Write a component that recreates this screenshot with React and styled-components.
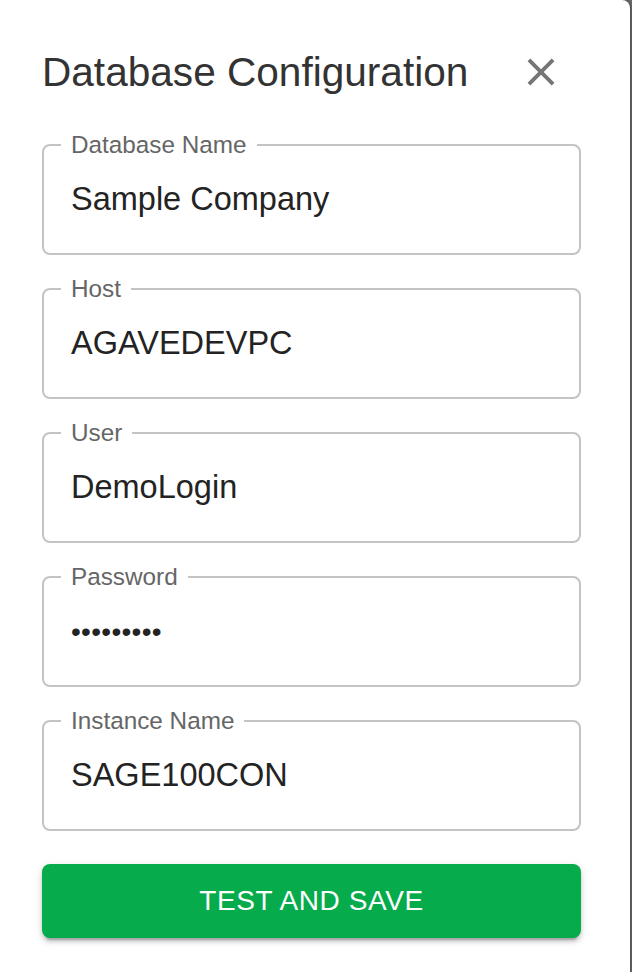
import React from 'react';
import styled, { createGlobalStyle } from 'styled-components';

const GlobalStyle = createGlobalStyle`
  html, body {
    margin: 0;
    padding: 0;
    background-color: #6a6a6a;
  }
  body {
    font-family: "Liberation Sans", Arial, sans-serif;
  }
`;

const StyledDialog = styled.div`
    box-sizing: border-box;
    width: 630px;
    min-height: 972px;
    padding: 40px 49px 0 42px;
    background-color: white;
    border-top-right-radius: 8px;
    box-shadow: 1px 0 3px rgba(0, 0, 0, 0.3);
`;

const StyledHeader = styled.div`
    display: flex;
    align-items: center;
    justify-content: space-between;
    height: 64px;
`;

const StyledTitle = styled.h2`
    margin: 0;
    font-size: 40.6px;
    font-weight: 400;
    line-height: 64px;
    color: #333333;
`;

const StyledClose = styled.button`
    display: flex;
    padding: 0;
    margin-right: 17px;
    border: none;
    background: none;
    color: #757575;
    cursor: pointer;

  & svg {
    width: 46px;
    height: 46px;
  }
`;

const StyledForm = styled.form`
    display: flex;
    flex-direction: column;
    gap: 22px;
    margin-top: 29px;
`;

const StyledField = styled.fieldset`
    margin: 0;
    padding: 0 24px 11px 27px;
    border: 2px solid #c4c4c4;
    border-radius: 8px;
    min-width: 0;
`;

const StyledLegend = styled.legend`
    margin-left: -10px;
    padding: 0 10px;
    font-size: 24.3px;
    line-height: 24px;
    color: #666666;
`;

const StyledValue = styled.div`
    height: 85px;
    line-height: 85px;
    font-size: ${(props) => (props.secret ? '28px' : '32.5px')};
    letter-spacing: ${(props) => (props.secret ? '0.3px' : '0')};
    color: #232323;
    white-space: nowrap;
`;

const StyledButton = styled.button`
    height: 74px;
    margin-top: 11px;
    border: none;
    border-radius: 8px;
    background-color: #06ab4b;
    color: white;
    font-family: "Liberation Sans", Arial, sans-serif;
    font-size: 28px;
    letter-spacing: 0.6px;
    text-transform: uppercase;
    cursor: pointer;
    box-shadow: 0 6px 2px -4px rgba(0, 0, 0, 0.2), 0 4px 4px rgba(0, 0, 0, 0.14), 0 2px 10px rgba(0, 0, 0, 0.12);
`;

const fields = [
    { label: 'Database Name', value: 'Sample Company' },
    { label: 'Host', value: 'AGAVEDEVPC' },
    { label: 'User', value: 'DemoLogin' },
    { label: 'Password', value: '•••••••••', secret: true },
    { label: 'Instance Name', value: 'SAGE100CON' },
];

const CloseIcon = () => (
    <svg viewBox="0 0 24 24" fill="currentColor">
        <path d="M19 6.41 17.59 5 12 10.59 6.41 5 5 6.41 10.59 12 5 17.59 6.41 19 12 13.41 17.59 19 19 17.59 13.41 12z"/>
    </svg>
);

const App = () => {
    return (
        <>
            <GlobalStyle/>
            <StyledDialog>
                <StyledHeader>
                    <StyledTitle>Database Configuration</StyledTitle>
                    <StyledClose type="button" aria-label="close"><CloseIcon/></StyledClose>
                </StyledHeader>
                <StyledForm onSubmit={(e) => e.preventDefault()}>
                    {fields.map((field) => (
                        <StyledField key={field.label}>
                            <StyledLegend>{field.label}</StyledLegend>
                            <StyledValue secret={field.secret}>{field.value}</StyledValue>
                        </StyledField>
                    ))}
                    <StyledButton type="submit">Test and Save</StyledButton>
                </StyledForm>
            </StyledDialog>
        </>
    );
};

export default App;
